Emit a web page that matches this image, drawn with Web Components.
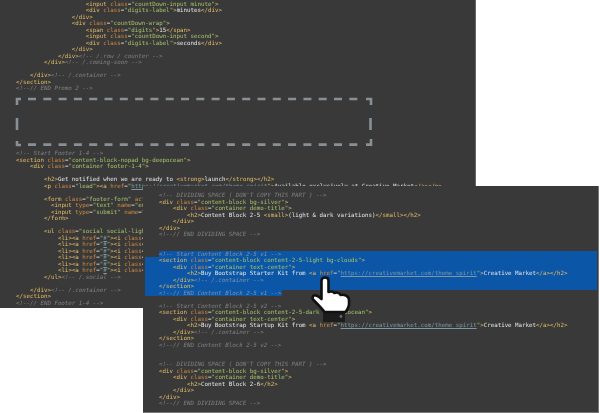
<!DOCTYPE html>
<html>
<head>
<meta charset="utf-8">
<title>Code blocks</title>
<style>
  html, body { margin: 0; padding: 0; background: #fff; }
  body { width: 600px; height: 413px; overflow: hidden; }
</style>
</head>
<body>
<code-sheet></code-sheet>
<script>
const BACK_LINES = [
  '                    <input class="countDown-input minute">',
  '                    <div class="digits-label">minutes</div>',
  '                </div>',
  '                <div class="countDown-wrap">',
  '                    <span class="digits">15</span>',
  '                    <input class="countDown-input second">',
  '                    <div class="digits-label">seconds</div>',
  '                </div>',
  '            </div><!-- /.row / counter -->',
  '        </div><!-- /.coming-soon -->',
  '',
  '    </div><!-- /.container -->',
  '</section>',
  '<!--// END Promo 2 -->',
  '', '', '', '', '', '', '', '', '',
  '<!-- Start Footer 1-4 -->',
  '<section class="content-block-nopad bg-deepocean">',
  '    <div class="container footer-1-4">',
  '',
  '        <h2>Get notified when we are ready to <strong>launch</strong></h2>',
  '        <p class="lead"><a href="https://creativemarket.com/theme_spirit">Available exclusively at Creative Market</a></p>',
  '',
  '        <form class="footer-form" action="#">',
  '          <input type="text" name="email" placeholder="Your email">',
  '          <input type="submit" name="submit" value="Send">',
  '        </form>',
  '',
  '        <ul class="social social-light">',
  '            <li><a href="#"><i class="fa fa-facebook"></i></a></li>',
  '            <li><a href="#"><i class="fa fa-twitter"></i></a></li>',
  '            <li><a href="#"><i class="fa fa-google-plus"></i></a></li>',
  '            <li><a href="#"><i class="fa fa-linkedin"></i></a></li>',
  '            <li><a href="#"><i class="fa fa-pinterest"></i></a></li>',
  '            <li><a href="#"><i class="fa fa-github"></i></a></li>',
  '        </ul><!-- /.social -->',
  '',
  '    </div><!-- /.container -->',
  '</section>',
  '<!--// END Footer 1-4 -->'
];

// second value: how far the selection reaches on that line
const FRONT_LINES = [
  '<!-- DIVIDING SPACE ( DON\'T COPY THIS PART ) -->',
  '<div class="content-block bg-silver">',
  '    <div class="container demo-title">',
  '        <h2>Content Block 2-5 <small>(light &amp; dark variations)</small></h2>',
  '    </div>',
  '</div>',
  '<!--// END DIVIDING SPACE -->',
  '',
  '',
  ['<!-- Start Content Block 2-5 v1 -->', 'first'],
  ['<section class="content-block content-2-5-light bg-clouds">', 'mid'],
  ['    <div class="container text-center">', 'mid'],
  ['        <h2>Buy Bootstrap Starter Kit from <a href="https://creativemarket.com/theme_spirit">Creative Market</a></h2>', 'mid'],
  ['    </div><!-- /.container -->', 'mid'],
  ['</section>', 'mid'],
  ['<!--// END Content Block 2-5 v1 -->', 'last'],
  '',
  '<!-- Start Content Block 2-5 v2 -->',
  '<section class="content-block content-2-5-dark bg-deepocean">',
  '    <div class="container text-center">',
  '        <h2>Buy Bootstrap Startup Kit from <a href="https://creativemarket.com/theme_spirit">Creative Market</a></h2>',
  '    </div><!-- /.container -->',
  '</section>',
  '<!--// END Content Block 2-5 v2 -->',
  '',
  '',
  '<!-- DIVIDING SPACE ( DON\'T COPY THIS PART ) -->',
  '<div class="content-block bg-silver">',
  '    <div class="container demo-title">',
  '        <h2>Content Block 2-6</h2>',
  '    </div>',
  '</div>',
  '<!--// END DIVIDING SPACE -->'
];

class CodeLine extends HTMLElement {
  constructor() {
    super();
    this.attachShadow({mode: 'open'});
  }

  set source(src) {
    this.shadowRoot.innerHTML = `
    <style>
      :host {
        display: block;
        align-self: stretch;
        height: 6.5px;
        line-height: 6.5px;
        color: #e6e6e6;
      }
      :host([sel]) { background: var(--selection); }
      :host([sel="mid"]), :host([sel="last"]) {
        margin-left: -14px;
        padding-left: 14px;
      }
      :host([sel="last"]) {
        align-self: flex-start;
        width: 122.5px;
      }
      .code { white-space: pre; filter: blur(0.25px); }
      .t { color: #e5bd66; }
      .a { color: #cf8a45; }
      .s { color: #a6c268; }
      .c { color: #808080; font-style: italic; }
      :host([sel]) .c { color: #7f93ab; }
      .u { color: #7b98a8; text-decoration: underline; }
    </style>
    <div class="code">${this.tokenize(src)}</div>`;
  }

  tokenize(src) {
    return src.split(/(<!--.*?-->|<[^>]*>)/).map(part => {
      if (part.startsWith('<!--')) {
        return `<span class="c">${this.esc(part)}</span>`;
      }
      if (part.startsWith('<')) {
        return this.tokenizeTag(part);
      }
      return part;
    }).join('');
  }

  tokenizeTag(tag) {
    let head = tag.match(/^<\/?\w+/)[0];
    let rest = tag.slice(head.length, -1).replace(/([\w-]+)=("[^"]*")/g, (m, name, value) => {
      let val = value.slice(1, -1);
      let cls = name === 'href' ? 'u' : 's';
      return `<span class="a">${name}</span>=<span class="s">"</span><span class="${cls}">${val}</span><span class="s">"</span>`;
    });
    return `<span class="t">${this.esc(head)}</span>${rest}<span class="t">&gt;</span>`;
  }

  esc(text) {
    return text.replace(/</g, '&lt;').replace(/>/g, '&gt;');
  }
}

class CodePanel extends HTMLElement {
  constructor() {
    super();
    this.attachShadow({mode: 'open'});
    this.shadowRoot.innerHTML = `
    <style>
      :host {
        display: block;
        box-sizing: border-box;
        overflow: hidden;
        background: #393939;
        font: 5.81px/6.5px "DejaVu Sans Mono", "Liberation Mono", monospace;
        --selection: #0b56a6;
      }
      .lines {
        display: flex;
        flex-direction: column;
      }
      .lines code-line { flex: none; }
    </style>
    <div class="lines"></div>`;
  }

  set lines(list) {
    let box = this.shadowRoot.querySelector('.lines');
    list.forEach(item => {
      let [src, sel] = Array.isArray(item) ? item : [item];
      let line = document.createElement('code-line');
      if (sel) line.setAttribute('sel', sel);
      line.source = src;
      box.appendChild(line);
    });
  }
}

class DashBox extends HTMLElement {
  constructor() {
    super();
    this.attachShadow({mode: 'open'});
    this.shadowRoot.innerHTML = `
    <style>
      :host { display: block; }
      svg { display: block; }
      path { fill: none; stroke: #889095; stroke-width: 2.6; }
    </style>
    <svg width="358" height="52" viewBox="0 0 358 52">
      <path d="M2 8V2H6"/>
      <path d="M2 21V33"/>
      <path d="M2 44V48H6"/>
      <path d="M13 2H348" stroke-dasharray="8 7.3"/>
      <path d="M13 47.6H348" stroke-dasharray="8 7.3"/>
      <path d="M351 2H356V8"/>
      <path d="M355.5 21V33"/>
      <path d="M351 47.6H356V42"/>
    </svg>`;
  }
}

class PointerHand extends HTMLElement {
  constructor() {
    super();
    this.attachShadow({mode: 'open'});
    this.shadowRoot.innerHTML = `
    <style>
      :host { display: block; }
      svg { display: block; }
    </style>
    <svg width="46" height="52" viewBox="0 0 46 52">
      <rect x="15" y="36" width="22" height="12" rx="1.5" fill="#1c1c1c"/>
      <circle cx="33" cy="42.5" r="1.4" fill="#6a6a6a"/>
      <path d="M13.5 6.5C13.5 2.5 20.5 2.5 20.5 6.5V18C23 17 25 17.5 26.5 19C29 18 31.5 19 32.5 21C36 20 41 22 41 26V30C41 33 39 36 37.5 38H16.5C13 33.5 8.5 29 5 25.5C3.5 23.5 5.5 20.5 8 21.5C10 22 12 23.5 13.5 25Z"
        fill="#fff" stroke="#111" stroke-width="2.6" stroke-linejoin="round"/>
    </svg>`;
  }
}

class CodeSheet extends HTMLElement {
  constructor() {
    super();
    this.attachShadow({mode: 'open'});
    this.shadowRoot.innerHTML = `
    <style>
      :host {
        display: block;
        position: relative;
        width: 600px;
        height: 413px;
        overflow: hidden;
        background: #fff;
      }
      code-panel { position: absolute; }
      #back {
        left: 0;
        top: 0;
        width: 476px;
        height: 308px;
        padding: 0.75px 0 0 16px;
        border-right: 1px solid #666;
      }
      #front {
        left: 143px;
        top: 186px;
        width: 456px;
        height: 227px;
        padding: 6.25px 1px 0 16px;
        border-right: 1px solid #777;
        border-bottom: 1px solid #777;
      }
      dash-box { position: absolute; left: 15px; top: 97px; }
      pointer-hand { position: absolute; left: 308px; top: 274px; }
    </style>
    <code-panel id="back"></code-panel>
    <dash-box></dash-box>
    <code-panel id="front"></code-panel>
    <pointer-hand></pointer-hand>`;
    this.shadowRoot.getElementById('back').lines = BACK_LINES;
    this.shadowRoot.getElementById('front').lines = FRONT_LINES;
  }
}

customElements.define('code-line', CodeLine);
customElements.define('code-panel', CodePanel);
customElements.define('dash-box', DashBox);
customElements.define('pointer-hand', PointerHand);
customElements.define('code-sheet', CodeSheet);
</script>
</body>
</html>
